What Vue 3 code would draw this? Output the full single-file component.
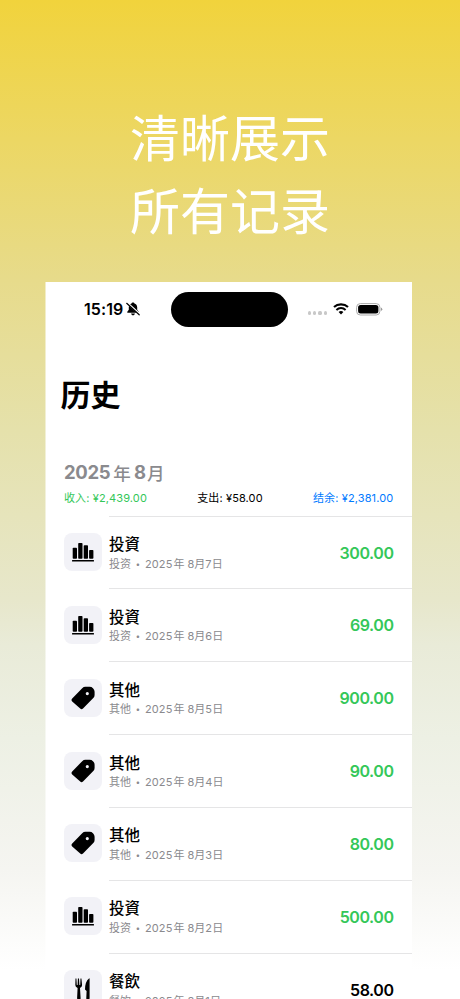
<script setup>
const rows = [
  { title: '投資', category: '投资', day: 7, amount: '300.00', icon: 'bars' },
  { title: '投資', category: '投资', day: 6, amount: '69.00', icon: 'bars' },
  { title: '其他', category: '其他', day: 5, amount: '900.00', icon: 'tag' },
  { title: '其他', category: '其他', day: 4, amount: '90.00', icon: 'tag' },
  { title: '其他', category: '其他', day: 3, amount: '80.00', icon: 'tag' },
  { title: '投資', category: '投资', day: 2, amount: '500.00', icon: 'bars' },
  { title: '餐飲', category: '餐饮', day: 1, amount: '58.00', icon: 'food', expense: true },
]
</script>

<template>
  <main class="poster">
    <h1 class="headline">清晰展示<br>所有记录</h1>
    <section class="screen">
      <header class="status">
        <div class="clock">
          <span>15:19</span>
          <svg class="bell" width="14" height="14" viewBox="0 0 14 14">
            <path d="M1.3 10.8V9.8L2.8 7.8V5.2C2.8 3.2 4 1.8 5.6 1.4C5.6 .1 8.4 .1 8.4 1.4C10 1.8 11.2 3.2 11.2 5.2V7.8L12.7 9.8V10.8Z" />
            <path d="M5 11.6H9Q8.6 13.4 7 13.4Q5.4 13.4 5 11.6Z" />
            <path d="M.9 .6L13.7 12.2" stroke="#fff" stroke-width="2" />
            <path d="M.7 1.3L13.2 12.8" stroke="#000" stroke-width="1.2" stroke-linecap="round" />
          </svg>
        </div>
        <div class="island"></div>
        <div class="signals">
          <div class="dots"><i v-for="n in 4" :key="n"></i></div>
          <svg class="wifi" width="16" height="12" viewBox="0 0 16 12" fill="none" stroke="#000">
            <path d="M1 4.1C4.8.5 11.2.5 15 4.1" stroke-width="2.1" />
            <path d="M3.4 6.9C6 4.5 10 4.5 12.6 6.9" stroke-width="2" />
            <path d="M5.6 9C7 7.8 9 7.8 10.4 9L8 11.5Z" fill="#000" stroke="none" />
          </svg>
          <svg class="battery" width="27" height="13" viewBox="0 0 27 13">
            <rect x=".6" y=".6" width="23.3" height="11.4" rx="3.7" fill="none" stroke="#aaa" />
            <rect x="2.1" y="2.1" width="20.3" height="8.4" rx="2.5" />
            <path d="M24.9 4.5Q26.3 5.1 26.3 6.3T24.9 8.1Z" fill="#999" />
          </svg>
        </div>
      </header>
      <h2 class="title">历史</h2>
      <div class="month"><span>2025</span><span class="year">年</span><span>8</span><span class="moon">月</span></div>
      <div class="summary">
        <span class="income">收入: ¥2,439.00</span>
        <span>支出: ¥58.00</span>
        <span class="balance">结余: ¥2,381.00</span>
      </div>
      <ul class="records">
        <li v-for="row in rows" :key="row.day" class="record">
          <div class="tile">
            <svg v-if="row.icon === 'bars'" width="24" height="24" viewBox="0 0 24 24">
              <rect x="1.7" y="7.7" width="4.3" height="11" rx=".8" />
              <rect x="7.2" y="3" width="4.3" height="15.7" rx=".8" />
              <rect x="12.7" y="5.3" width="4.3" height="13.4" rx=".8" />
              <rect x="18.1" y="10" width="4.3" height="8.7" rx=".8" />
              <rect x="1" y="20" width="22" height="1.6" rx=".5" />
            </svg>
            <svg v-else-if="row.icon === 'tag'" width="24" height="24" viewBox="0 0 24 24">
              <path fill-rule="evenodd" d="M11.2 2.2Q12.6.8 14.4.8H18.6Q20.6.8 22 2.2Q23.6 3.8 23.6 5.8V9Q23.6 10.8 22.3 12.1L12 22.4Q10.6 23.8 9.2 22.5L1.2 15.5Q-.2 14 1.2 12.5ZM16.3 6A1.6 1.6 0 1 0 16.3 9.2A1.6 1.6 0 1 0 16.3 6Z" />
            </svg>
            <svg v-else width="24" height="24" viewBox="0 0 24 24">
              <path d="M4.5 1.5H5.4L5.8 8H6.6L6.9 1.5H8L8.4 8H9.2L9.5 1.5H10.4L11.1 8Q11.1 10 9 10.9L9.6 21Q9.7 23 7.9 23T6.1 21L6.6 10.9Q4.3 10 4.3 8Z" />
              <path d="M18 1.4Q18.6 1 18.6 1.8V21Q18.6 23 16.9 23T15.3 21L15.6 14L14 12.5Q14 4.5 18 1.4Z" />
            </svg>
          </div>
          <div class="body">
            <div class="copy">
              <div class="name">{{ row.title }}</div>
              <div class="detail"><span>{{ row.category }}</span><b>•</b><span class="num">2025</span><span class="year">年</span><span class="num">8</span><span>月</span><span class="num">{{ row.day }}</span><span>日</span></div>
            </div>
            <div class="amount" :class="{ expense: row.expense }">{{ row.amount }}</div>
          </div>
        </li>
      </ul>
    </section>
  </main>
</template>

<style>
body { margin: 0; }
</style>

<style scoped>
* { box-sizing: border-box; }
svg { display: block; flex: none; }
.poster {
  width: 460px;
  height: 999px;
  overflow: hidden;
  padding-top: 103px;
  background: linear-gradient(#f1d33c 0, #e7db8b 280px, #e5e1ab 430px, #e7e7cb 600px, #e9ebd8 645px, #edf0e4 738px, #f5f5f1 870px, #fff 970px);
  font-family: Inter, "Noto Sans CJK SC", sans-serif;
}
.headline { margin: 0; height: 179px; font-size: 50px; line-height: 73px; font-weight: 400; color: #fff; text-align: center; }
.screen { width: 366.5px; height: 730px; margin-left: 45.5px; background: #fff; color: #000; box-shadow: -1px 0 rgba(255, 255, 255, .5); }
.status { display: flex; height: 54px; padding-top: 10px; }
.clock { display: flex; width: 125px; padding-left: 38.5px; height: 34px; align-items: center; font-size: 16px; font-weight: 600; letter-spacing: .1px; }
.bell { margin-left: 3px; }
.island { width: 117px; height: 35px; border-radius: 18px; background: #000; }
.signals { display: flex; height: 34px; padding-left: 20.5px; align-items: center; }
.dots { display: flex; gap: 2px; padding-top: 8px; }
.dots i { width: 3.2px; height: 3.2px; border-radius: 50%; background: #c8c8c8; }
.wifi { margin-left: 6.5px; }
.battery { margin-left: 7px; }
.title { margin: 35px 0 0 15px; font-size: 30px; line-height: 48px; font-weight: 700; }
.month { display: flex; align-items: center; height: 28px; margin: 39px 0 0 18.5px; font-size: 18.5px; font-weight: 700; letter-spacing: -.35px; color: #8a8a8e; }
.month .year { margin: 0 3.5px 0 3px; font-size: 17.5px; }
.month .moon { margin-left: 1.5px; font-size: 17.5px; }
.month .year, .month .moon { font-weight: 500; }
.summary { display: flex; justify-content: space-between; height: 48px; padding: 4px 19px 0 18.5px; margin-bottom: -18.5px; font-size: 11px; line-height: 16px; letter-spacing: .12px; }
.income { color: #34c759; }
.balance { color: #007aff; margin-right: -.3px; }
.records { margin: 0; padding: 0; list-style: none; }
.record { display: flex; height: 72.85px; padding-left: 18.5px; }
.tile { display: flex; align-items: center; justify-content: center; width: 38px; height: 38px; margin-top: 17.5px; border-radius: 8px; background: #f2f2f7; }
.body { display: flex; flex: 1; justify-content: space-between; margin-left: 7px; border-top: 1px solid #e5e5e6; padding-right: 18.5px; }
.copy { padding-top: 17.5px; }
.name { height: 21.5px; font-size: 15.5px; line-height: 22px; font-weight: 500; }
.detail { display: flex; align-items: center; height: 17px; font-size: 11px; line-height: 17px; color: #8a8a8e; }
.detail b { width: 14px; text-align: center; font-size: 8px; }
.detail .num { letter-spacing: .1px; }
.detail .year { margin: 0 3px 0 1px; }
.amount { padding-top: 25px; font-size: 16px; line-height: 22px; font-weight: 600; letter-spacing: -.45px; color: #34c759; }
.amount.expense { color: #000; }
</style>
